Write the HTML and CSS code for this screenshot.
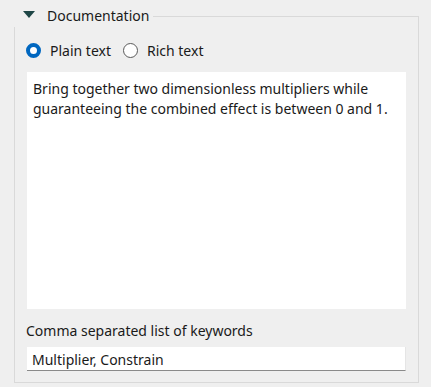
FILE: index.html
```html
<!DOCTYPE html>
<html lang="en">
<head>
    <meta charset="UTF-8">
    <title>Documentation</title>
    <link rel="stylesheet" href="styles.css">
</head>
<body>

    <!-- Collapsible group header -->
    <div class="group-head">
        <span class="caret"></span>
        <span class="group-title">Documentation</span>
        <span class="group-line"></span>
    </div>

    <div class="group-body">
        <div class="radios">
            <label class="radio checked"><span class="dot"></span>Plain text</label>
            <label class="radio"><span class="dot"></span>Rich text</label>
        </div>

        <div class="doc-text">Bring together two dimensionless multipliers while guaranteeing the combined effect is between 0 and 1.</div>

        <div class="field-label">Comma separated list of keywords</div>
        <div class="field-input">Multiplier, Constrain</div>
    </div>

</body>
</html>
```

FILE: styles.css
```css
body {
    margin: 0;
    background-color: #efefef;
    font-family: "Noto Sans", sans-serif;
    font-size: 14px;
    color: #1a1a1a;
}

/* Group header with the line that runs into the frame */
.group-head {
    display: flex;
    align-items: flex-start;
    height: 27px;
    margin-left: 14px;
    width: 405px;
}
.caret {
    width: 0;
    height: 0;
    margin: 11px 0 0 9px;
    border-left: 6px solid transparent;
    border-right: 6px solid transparent;
    border-top: 7px solid #1e4646;
}
.group-title {
    margin: 6px 0 0 12px;
    line-height: 20px;
}
.group-line {
    flex: 1;
    height: 10px;
    margin: 16px 0 0 4px;
    border-top: 1px solid #d9d9d9;
    border-right: 1px solid #d9d9d9;
}

.group-body {
    margin-left: 14px;
    width: 379px;
    padding: 0 12px 11px 12px;
    border: 1px solid #d9d9d9;
    border-top: none;
}

/* Radio buttons */
.radios {
    box-sizing: border-box;
    display: flex;
    align-items: center;
    height: 45px;
    padding-top: 2px;
}
.radio {
    display: flex;
    align-items: center;
    margin-right: 13px;
}
.dot {
    box-sizing: border-box;
    width: 15px;
    height: 15px;
    margin: 0 9px 0 -1px;
    border: 1px solid #5a5a5a;
    border-radius: 50%;
    background-color: #fff;
}
.radio.checked .dot {
    border: 4px solid #0067c0;
}

.doc-text {
    box-sizing: border-box;
    height: 237px;
    padding: 7px 6px 6px 6px;
    background-color: #fff;
    line-height: 20px;
}

.field-label {
    margin: 12px 0 0 -1px;
    line-height: 20px;
}
.field-input {
    box-sizing: border-box;
    height: 24px;
    margin-top: 6px;
    padding: 3px 6px 0 5px;
    background-color: #fff;
    border-bottom: 1px solid #8a8a8a;
    border-right: 1px solid #e5e5e5;
    line-height: 20px;
}
```
